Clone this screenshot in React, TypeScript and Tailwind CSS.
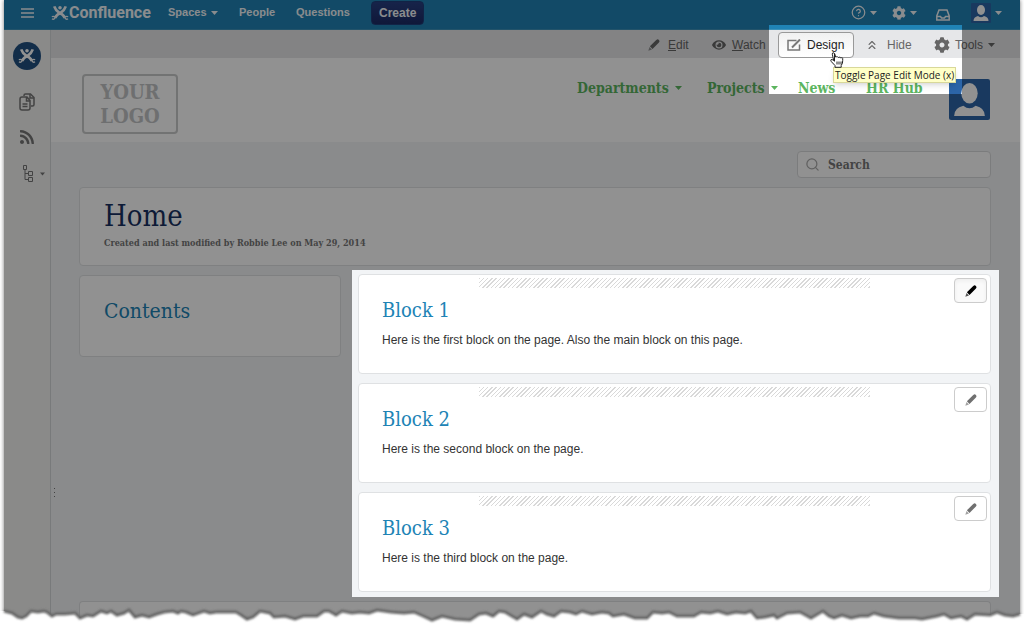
import type { ReactNode } from "react"
import { ChevronsUp, CircleHelp, Search } from "lucide-react"
import { FaCog, FaEye, FaRss } from "react-icons/fa"

type Block = {
  id: number
  title: string
  text: string
  active?: boolean
}

const blocks: Block[] = [
  { id: 1, title: "Block 1", text: "Here is the first block on the page. Also the main block on this page.", active: true },
  { id: 2, title: "Block 2", text: "Here is the second block on the page." },
  { id: 3, title: "Block 3", text: "Here is the third block on the page." },
]

const tearLine =
  "M4 13 L12 15 18 19 22 20 26 18 31 13 38 14 44 13 47 14 52 18 56 16 65 16 75 15 80 20 87 17 93 18 101 13 107 15 111 13 117 17 124 15 129 12 135 19 142 17 149 19 157 16 164 14 173 13 178 15 181 13 186 14 193 17 204 13 210 15 216 14 236 14 241 17 247 21 253 19 260 13 270 15 274 19 285 18 295 21 303 18 317 18 324 13 329 13 336 17 342 13 352 15 360 14 369 15 377 12 391 14 404 15 414 14 423 18 432 22 442 18 455 21 470 22 479 16 486 15 493 18 499 13 505 14 510 17 517 21 524 16 532 19 541 13 547 16 554 18 561 13 570 14 576 16 582 13 592 16 602 14 609 15 613 18 624 16 635 20 647 20 653 14 662 15 669 14 677 18 694 18 701 14 710 15 718 13 727 16 736 14 745 15 751 13 757 20 765 19 774 17 777 20 787 15 800 14 811 20 823 13 829 18 834 20 842 17 851 20 860 18 868 18 874 15 884 18 899 20 915 20 922 21 937 18 944 16 951 20 961 18 967 21 975 16 990 17 997 14 1005 17 1013 18 1020 16"

function Caret({ className = "w-[7px]" }: { className?: string }) {
  return (
    <svg viewBox="0 0 7 4" className={`h-1 shrink-0 ${className}`} fill="currentColor" aria-hidden="true">
      <path d="M0 0h7L3.500 4z" />
    </svg>
  )
}

function Pencil() {
  return (
    <svg viewBox="0 0 12 12" className="size-3 shrink-0" fill="currentColor" aria-hidden="true">
      <path d="M8 1.200 9 .4Q10 0 10.900.9 11.800 1.800 11.400 2.800L10.700 3.700 4.500 9.900 1.900 7.300z" />
      <path d="M1.500 7.900 4 10.400.3 11.700z" opacity=".65" />
    </svg>
  )
}

function FigureMark({ className = "" }: { className?: string }) {
  return (
    <svg viewBox="0 0 20 18" className={`shrink-0 ${className}`} fill="none" stroke="currentColor" aria-hidden="true">
      <path d="M3.500 1.500Q5 6 9 8.500 14 11 15.500 14.500M16.500 1.500Q15 6 11 8.500 6 11 4.500 14.500" strokeWidth="3" />
      <path d="M4.500 14.500Q3 17 1 15.500M4.500 13.500Q2 12 1 13.500M15.500 14.500Q17 17 19 15.500M15.500 13.500Q18 12 19 13.500" strokeWidth="1.500" />
      <circle cx="10" cy="3" r="2" fill="currentColor" stroke="none" />
    </svg>
  )
}

function Avatar({ className = "" }: { className?: string }) {
  return (
    <svg viewBox="0 0 40 40" className={`shrink-0 ${className}`} role="img" aria-label="User profile">
      <rect width="40" height="40" rx="2" fill="#2c65a8" />
      <ellipse cx="20" cy="14" rx="8" ry="10" fill="#fff" />
      <path d="M5 36Q5 28 14 26Q20 31 26 26Q35 28 35 36z" fill="#fff" />
    </svg>
  )
}

function PointerHand({ className = "" }: { className?: string }) {
  return (
    <svg viewBox="0 0 14 16" className={className} aria-hidden="true">
      <path
        d="M4.500 9.500V2Q4.300.700 3.300.700 2.200.700 2.300 2.200L3.700 8.600Q2 7 1 7.700.300 8.500 1.400 9.700L5 13.500V15.300H11.200V13.500Q12.900 11.500 12.700 8.500V6.500Q12.500 5.500 11.500 5.700L10.700 6Q10.300 4.900 9.200 5.200L8.300 5.500Q7.800 4.500 6.700 4.700L5.700 5.100 4.700 1.600"
        fill="#fff"
        stroke="#222"
        strokeLinejoin="round"
      />
      <path d="M7 9.500v3M9 9.500v3M11 9.500v3" stroke="#222" fill="none" />
    </svg>
  )
}

function TopBar() {
  return (
    <header className="flex h-[30px] items-center border-b border-[#3d93bb] bg-[#2083b5] pr-[18px] pl-4 pb-1 text-xs text-[#f2f6f9]">
      <button aria-label="Menu" className="w-[31px]">
        <svg viewBox="0 0 15 12" className="h-3 w-[15px]" stroke="currentColor" strokeWidth="1.500">
          <path d="M1 2H14M1 6H14M1 10H14" />
        </svg>
      </button>
      <a href="#" className="flex w-[117px] items-center font-[Roboto,sans-serif] text-base leading-4 font-bold">
        <FigureMark className="h-4 w-[18px]" />
        Confluence
      </a>
      <nav className="flex items-center font-bold text-[11px]">
        <button className="flex w-[71px] items-center gap-1">
          Spaces <Caret />
        </button>
        <a href="#" className="w-[57px]">People</a>
        <a href="#" className="w-[75px]">Questions</a>
      </nav>
      <button className="h-6 rounded-sm border border-[#1f3f7c] bg-linear-to-b from-[#283f82] to-[#1c2b66] px-[7px] font-bold">
        Create
      </button>
      <div className="ml-auto flex items-center">
        <button aria-label="Help" className="flex w-[41px] items-center gap-1">
          <CircleHelp className="size-[15px]" /> <Caret />
        </button>
        <button aria-label="Settings" className="flex w-[44px] items-center gap-1">
          <FaCog className="size-[14px]" /> <Caret />
        </button>
        <button aria-label="Notifications" className="w-[35px]">
          <svg viewBox="0 0 14 12" className="mt-1 h-3 w-[14px]" fill="none" stroke="currentColor" strokeWidth="1.500">
            <path d="M3 1H11L13.200 7V11H.8V7z" />
            <path d="M1 7.500H4.500L5.500 9H8.500L9.500 7.500H13" />
          </svg>
        </button>
        <button aria-label="Account" className="flex items-center gap-1">
          <Avatar className="size-5" /> <Caret />
        </button>
      </div>
    </header>
  )
}

function SideBar() {
  return (
    <aside className="flex w-[47px] shrink-0 flex-col items-center border-r border-[#d3d7d9] bg-[#f2f2f1] pt-3 text-[#777]">
      <a href="#" aria-label="Space" className="flex size-7 items-center justify-center rounded-full bg-[#205081] text-white">
        <FigureMark className="h-4 w-[18px]" />
      </a>
      <a href="#" aria-label="Pages" className="mt-[23px]">
        <svg viewBox="0 0 16 18" className="block h-[18px] w-4" fill="none" stroke="currentColor" strokeWidth="1.500">
          <path d="M5 3V2.500Q5 1 6.500 1H11.500L15 4.500V11.500Q15 13 13.500 13H12" />
          <path d="M11 1V5H15M1 6Q1 4 3 4H8L11 7.500V15Q11 17 9 17H3Q1 17 1 15zM7.500 4V8H11M3.500 11H8.500M3.500 13.500H8.500" />
        </svg>
      </a>
      <a href="#" aria-label="Blog" className="mt-[18px]">
        <FaRss className="size-4" />
      </a>
      <button aria-label="Page tree" className="mt-5 flex items-center gap-[7px] pl-[14px]">
        <svg viewBox="0 0 10 17" className="h-[17px] w-[10px]" fill="none" stroke="currentColor">
          <path d="M.5.500h3v4h-3zM2 4.500V14.500H5.500M2 8.500H5.500M5.500 6.500h4v4h-4zM5.500 12.500h4v4h-4z" />
        </svg>
        <Caret className="w-[5px]" />
      </button>
    </aside>
  )
}

function ToolItem({ icon, width, children }: { icon: ReactNode; width: string; children: ReactNode }) {
  return (
    <button className={`flex items-center ${width}`}>
      {icon}
      {children}
    </button>
  )
}

function ToolBar() {
  return (
    <div className="flex h-7 items-center justify-end bg-[#e6e7e9] pt-[2px] pr-[25px] text-xs text-[#666]">
      <ToolItem width="w-16 gap-2" icon={<Pencil />}>
        <span><u>E</u>dit</span>
      </ToolItem>
      <ToolItem width="w-[66px] gap-[6px]" icon={<FaEye className="size-[14px]" />}>
        <span><u>W</u>atch</span>
      </ToolItem>
      <div className="relative">
        <button className="flex h-[26px] w-[76px] items-center gap-[6px] rounded-sm border border-[#999] bg-linear-to-b from-[#f1f1f1] to-white pl-2 text-[#222]">
          <svg viewBox="0 0 14 12" className="h-3 w-[14px]" fill="none" stroke="#777" aria-hidden="true">
            <path d="M9.500 1.500H1V11H12.500V5.500" strokeWidth="1.500" />
            <path d="M5 8.500 13 .5" strokeWidth="2" />
          </svg>
          Design
        </button>
        <PointerHand className="absolute top-5 left-[52px] z-50 h-4 w-[14px]" />
        <div role="tooltip" className="absolute top-[35px] left-[55px] z-40 border border-[#d8d89a] bg-[#ffffc7] px-px font-['Open_Sans',sans-serif] text-[10px] leading-[14px] font-medium whitespace-nowrap text-[#222] shadow-md">
          Toggle Page Edit Mode (x)
        </div>
      </div>
      <ToolItem width="ml-[11px] w-[69px] gap-2" icon={<ChevronsUp className="size-[14px]" />}>
        Hide
      </ToolItem>
      <ToolItem width="gap-[5px]" icon={<FaCog className="size-4" />}>
        Tools <Caret />
      </ToolItem>
    </div>
  )
}

function SiteHeader() {
  return (
    <div className="flex h-[84px] items-start bg-white pt-4 pr-[30px] pl-[31px] font-['DejaVu_Serif_Condensed','DejaVu_Serif',serif]">
      <a href="#" className="h-[60px] w-24 rounded-sm border-2 border-[#c9cacb] pt-1 text-center text-xl leading-6 font-bold text-[#c2c4c6]">
        YOUR
        <br />
        LOGO
      </a>
      <nav className="mt-1 ml-auto flex text-sm font-bold text-[#5cb55f]">
        <button className="flex w-[130px] items-center gap-[6px]">
          Departments <Caret />
        </button>
        <button className="flex w-[91px] items-center gap-[6px]">
          Projects <Caret />
        </button>
        <a href="#" className="w-[68px]">News</a>
        <a href="#" className="w-[83px]">HR Hub</a>
      </nav>
      <Avatar className="mt-[5px] size-[41px]" />
    </div>
  )
}

function BlockCard({ block }: { block: Block }) {
  return (
    <article className="relative h-[100px] rounded-sm border border-[#dfe1e3] bg-white px-[23px] pt-[23px]">
      <div className="absolute inset-x-[120px] top-[3px] h-[10px] bg-[repeating-linear-gradient(135deg,#d9d9d9_0_1px,#fff_1px_3px)]" />
      <button
        aria-label={`Edit ${block.title}`}
        className={`absolute top-[3px] right-[3px] flex h-[25px] w-[33px] items-center justify-center rounded-sm border border-[#ccc] ${block.active ? "bg-[#fafafa] text-black inset-shadow-sm" : "bg-white text-[#707070]"}`}
      >
        <Pencil />
      </button>
      <h2 className="font-['DejaVu_Serif_Condensed','DejaVu_Serif',serif] text-xl leading-6 text-[#2083b5]">{block.title}</h2>
      <p className="mt-[10px] text-xs leading-4 text-[#333]">{block.text}</p>
    </article>
  )
}

export default function App() {
  return (
    <div className="relative bg-white px-1 font-['Liberation_Sans',Arial,sans-serif]">
      <div className="relative overflow-hidden shadow-[0_0_4px_#777]">
        <TopBar />
        <div className="flex">
          <SideBar />
          <main className="relative min-w-0 flex-1 bg-[#f2f4f6]">
            <ToolBar />
            <SiteHeader />
            <div className="pt-[9px] pr-[29px] pl-7">
              <label className="ml-auto flex h-[27px] w-[194px] items-center gap-2 rounded-sm border border-[#d8dadc] bg-white px-[7px] text-[#aaa]">
                <Search className="size-[15px] shrink-0" />
                <input
                  aria-label="Search"
                  placeholder="Search"
                  className="w-full font-['DejaVu_Serif_Condensed','DejaVu_Serif',serif] text-xs font-bold outline-none placeholder:text-[#777]"
                />
              </label>
              <section className="mt-[9px] h-[79px] rounded-sm border border-[#dfe1e3] bg-white px-6 pt-3 font-['DejaVu_Serif_Condensed','DejaVu_Serif',serif]">
                <h1 className="text-[29px] leading-8 text-[#183061]">Home</h1>
                <p className="mt-[3px] text-[9px] leading-4 font-bold text-[#777]">Created and last modified by Robbie Lee on May 29, 2014</p>
              </section>
              <div className="mt-1 -mr-2 flex items-start gap-[11px]">
                <section className="mt-[5px] h-[82px] w-[262px] shrink-0 rounded-sm border border-[#dfe1e3] bg-white px-6 pt-[23px]">
                  <h2 className="font-['DejaVu_Serif_Condensed','DejaVu_Serif',serif] text-[21px] leading-6 text-[#2083b5]">Contents</h2>
                </section>
                <section className="relative z-20 flex flex-1 flex-col gap-[9px] bg-[#f2f4f6] pt-1 pr-2 pb-[5px] pl-[6px]">
                  {blocks.map((block) => (
                    <BlockCard key={block.id} block={block} />
                  ))}
                </section>
              </div>
              <div className="mt-1 h-[27px] rounded-t-sm border border-b-0 border-[#dfe1e3] bg-white" />
            </div>
            <div className="absolute top-[458px] left-[3px] flex flex-col gap-[3px]">
              <i className="size-px bg-[#777]" />
              <i className="size-px bg-[#777]" />
              <i className="size-px bg-[#777]" />
            </div>
          </main>
        </div>
        {/* dims everything around the toolbar spotlight */}
        <div className="pointer-events-none absolute top-[25px] right-[58px] z-10 h-[69px] w-[193px] shadow-[0_0_0_2000px_rgba(0,0,0,0.43)]" />
      </div>
      <svg viewBox="0 0 1024 30" preserveAspectRatio="none" className="absolute bottom-0 left-0 z-30 h-[30px] w-full" aria-hidden="true">
        <defs>
          <filter id="soft" x="-1%" y="-50%" width="102%" height="200%">
            <feGaussianBlur stdDeviation="1" />
          </filter>
        </defs>
        <path d={`${tearLine} L1024 16V30H0V13z`} fill="#fff" />
        <path d={tearLine} fill="none" stroke="#666" strokeWidth="3" filter="url(#soft)" />
      </svg>
    </div>
  )
}
